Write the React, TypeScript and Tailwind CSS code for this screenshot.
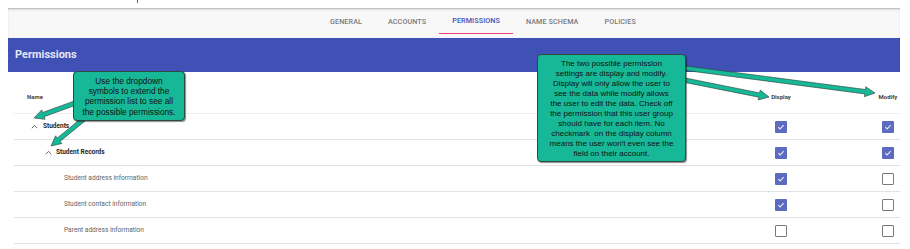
import React from "react";

const tabs = ["GENERAL", "ACCOUNTS", "PERMISSIONS", "NAME SCHEMA", "POLICIES"];

type Row = { label: string; level: 0 | 1 | 2; display: boolean; modify: boolean };

const rows: Row[] = [
  { label: "Students", level: 0, display: true, modify: true },
  { label: "Student Records", level: 1, display: true, modify: true },
  { label: "Student address information", level: 2, display: true, modify: false },
  { label: "Student contact information", level: 2, display: true, modify: false },
  { label: "Parent address information", level: 2, display: false, modify: false },
];

const TEAL = "#17b897";

function Checkbox({ checked }: { checked: boolean }) {
  if (!checked) {
    return <span className="block h-[12px] w-[12px] rounded-[1px] border-[1.5px] border-[#7a7a7a] bg-white" />;
  }
  return (
    <span className="flex h-[12px] w-[12px] items-center justify-center rounded-[1px] bg-[#5c6bc0]">
      <svg width="8" height="8" viewBox="0 0 8 8" fill="none">
        <path d="M1.3 4.2 L3.1 5.9 L6.7 2.2" stroke="#e8eaf6" strokeWidth="1.1" />
      </svg>
    </span>
  );
}

function Chevron() {
  return (
    <svg width="7" height="5" viewBox="0 0 7 5" fill="none" className="shrink-0">
      <path d="M0.8 4.2 L3.5 1.3 L6.2 4.2" stroke="#6b6b6b" strokeWidth="1" />
    </svg>
  );
}

function arrowPoints(x1: number, y1: number, x2: number, y2: number) {
  const dx = x2 - x1;
  const dy = y2 - y1;
  const len = Math.hypot(dx, dy);
  const ux = dx / len;
  const uy = dy / len;
  const nx = -uy;
  const ny = ux;
  const shaft = 2.2;
  const head = 5;
  const headLen = 10;
  const bx = x2 - ux * headLen;
  const by = y2 - uy * headLen;
  const p = [
    [x1 + nx * shaft, y1 + ny * shaft],
    [bx + nx * shaft, by + ny * shaft],
    [bx + nx * head, by + ny * head],
    [x2, y2],
    [bx - nx * head, by - ny * head],
    [bx - nx * shaft, by - ny * shaft],
    [x1 - nx * shaft, y1 - ny * shaft],
  ];
  return p.map(([a, b]) => `${a.toFixed(1)},${b.toFixed(1)}`).join(" ");
}

const arrows = [
  [78, 102, 34, 118],
  [84, 119, 51, 146],
  [684, 80, 769, 97],
  [684, 68, 875, 93],
];

export default function App() {
  return (
    <div className="relative h-[249px] w-[910px] overflow-hidden bg-white font-['Roboto',sans-serif]">
      <div className="h-[8px]">
        <span className="ml-[137px] block h-[3px] w-[1px] bg-[#4b55b0]" />
      </div>

      <div className="ml-[8px] w-[892px]">
        <div className="flex h-[30px] items-start border-t border-[#c2c2c2] bg-[#f8f8f8] pl-[309px] shadow-[inset_0_1px_2px_rgba(0,0,0,0.12)]">
          {tabs.map((t) => {
            const active = t === "PERMISSIONS";
            return (
              <div
                key={t}
                className={`flex h-[25px] items-center px-[13px] pt-[1px] text-[7.2px] font-medium tracking-[0.1px] ${
                  active ? "border-b-[1.5px] border-[#ec4079] text-[#3f51b5]" : "text-[#7a7a7a]"
                }`}
              >
                {t}
              </div>
            );
          })}
        </div>

        <div className="flex h-[34px] items-center bg-[#3f51b5] px-[7px]">
          <span className="text-[11px] font-bold text-[#e4e6f5]">Permissions</span>
        </div>

        <div className="pl-[6px]">
          <div className="grid h-[42px] grid-cols-[1fr_60px_65px_24px] items-center border-b border-[#eeeeee] pt-[8px] text-[6px] font-bold text-[#424242]">
            <span className="pl-[13px]">Name</span>
            <span className="text-center">Display</span>
            <span />
            <span className="text-center">Modify</span>
          </div>
          {rows.map((r) => (
            <div
              key={r.label}
              className="grid h-[26px] grid-cols-[1fr_60px_65px_24px] items-center border-b border-[#e2e2e2]"
            >
              <div
                className={`flex items-center ${
                  r.level === 0 ? "gap-[5px] pl-[17px]" : r.level === 1 ? "gap-[4px] pl-[31px]" : "pl-[50px]"
                }`}
              >
                {r.level < 2 && <Chevron />}
                <span
                  className={
                    r.level < 2
                      ? "text-[6.5px] font-bold text-[#262626]"
                      : "text-[6.6px] text-[#636363]"
                  }
                >
                  {r.label}
                </span>
              </div>
              <div className="flex justify-center">
                <Checkbox checked={r.display} />
              </div>
              <span />
              <div className="flex justify-center">
                <Checkbox checked={r.modify} />
              </div>
            </div>
          ))}
        </div>
      </div>

      <svg className="absolute left-0 top-0" width="910" height="249">
        {arrows.map(([a, b, c, d], i) => (
          <polygon
            key={i}
            points={arrowPoints(a, b, c, d)}
            fill={TEAL}
            stroke="#2f3a36"
            strokeWidth="0.6"
            strokeLinejoin="round"
          />
        ))}
      </svg>

      <div className="absolute left-[73px] top-[71px] flex h-[50px] w-[112px] flex-col items-center rounded-[4px] border border-[#2f4a42] bg-[#17b897] pt-[4px] text-center font-['Liberation_Sans',Arial,sans-serif] text-[8.3px] leading-[10.2px] text-[#111] shadow-[1px_1px_1px_rgba(0,0,0,0.45)]">
        <span>Use the dropdown</span>
        <span>symbols to extend the</span>
        <span>permission list to see all</span>
        <span>the possible permissions.</span>
      </div>

      <div className="absolute left-[537px] top-[54px] flex h-[108px] w-[149px] flex-col items-center rounded-[4px] border border-[#2f4a42] bg-[#17b897] pt-[4px] text-center font-['Liberation_Sans',Arial,sans-serif] text-[8px] leading-[9.95px] text-[#111] shadow-[1px_1px_1px_rgba(0,0,0,0.45)]">
        <span>The two possible permission</span>
        <span>settings are display and modify.</span>
        <span>Display will only allow the user to</span>
        <span>see the data while modify allows</span>
        <span>the user to edit the data. Check off</span>
        <span>the permission that this user group</span>
        <span>should have for each item. No</span>
        <span className="whitespace-pre">checkmark  on the display column</span>
        <span>means the user won't even see the</span>
        <span>field on their account.</span>
      </div>
    </div>
  );
}
